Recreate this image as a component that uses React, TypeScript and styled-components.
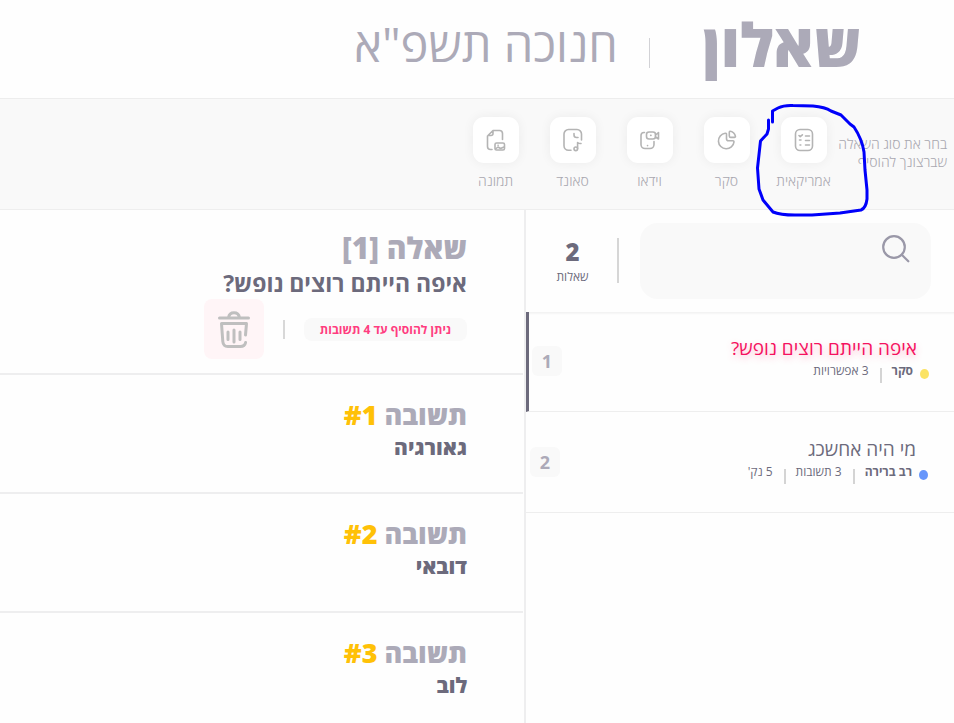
import React from "react";
import styled, { createGlobalStyle } from "styled-components";

const GlobalStyle = createGlobalStyle`
  * { box-sizing: border-box; }
  html, body, #root { height: 100%; }
  body {
    margin: 0;
    background: #fefefe;
    color: #6c6a7c;
    font-family: "Open Sans", "Noto Sans", sans-serif;
    overflow: hidden;
  }
  h1, h2, h3, p, ul, ol { margin: 0; padding: 0; }
  ul, ol { list-style: none; }
  button { font: inherit; border: 0; padding: 0; background: none; cursor: pointer; }
`;

const Page = styled.div`
  min-height: 100%;
  display: flex;
  flex-direction: column;
`;

const Header = styled.header`
  display: flex;
  align-items: center;
  height: 99px;
  padding: 0 93px 10px 0;
  border-bottom: 1px solid #ededed;
  color: #acaab8;
`;

const Brand = styled.h1`
  font-size: 60px;
  line-height: 80px;
  font-weight: 800;
`;

const HeaderRule = styled.span`
  width: 1px;
  height: 30px;
  margin: 18px 53px 0 31px;
  background: #d2d2d6;
`;

const QuizName = styled.h2`
  font-size: 47px;
  line-height: 64px;
  font-weight: 400;
`;

const Toolbar = styled.nav`
  position: relative;
  display: flex;
  height: 111px;
  padding-right: 7px;
  background: #f9f9f9;
  border-bottom: 1px solid #eeeeee;
`;

const Hint = styled.p`
  width: 105px;
  padding-top: 36px;
  font-size: 14px;
  line-height: 18px;
  font-weight: 300;
  color: #a9a8b0;
  white-space: nowrap;
`;

const Tool = styled.button`
  width: 77px;
  display: flex;
  flex-direction: column;
  align-items: center;
  padding-top: 18px;
  font-size: 14px;
  line-height: 20px;
  font-weight: 300;
  color: #a9a8b0;
`;

const ToolTile = styled.span`
  display: grid;
  place-items: center;
  width: 46px;
  height: 46px;
  margin-bottom: 8px;
  border-radius: 11px;
  background: #fff;
  box-shadow: 0 0 12px rgba(0, 0, 0, 0.06);
`;

const LineIcon = styled.svg`
  fill: none;
  stroke: #b4b4b4;
  stroke-width: 1.6;
  stroke-linecap: round;
  stroke-linejoin: round;
`;

const Scribble = styled.svg`
  position: absolute;
  top: 0;
  right: 84px;
  overflow: visible;
  pointer-events: none;
`;

const Main = styled.main`
  flex: 1;
  display: grid;
  grid-template-columns: 430px 1fr;
`;

const Sidebar = styled.aside`
  border-left: 2px solid #eeeeef;
`;

const SearchBar = styled.div`
  display: flex;
  height: 102px;
  padding: 13px 23px 0 0;
`;

const SearchBox = styled.label`
  flex: 1;
  display: flex;
  height: 76px;
  padding: 12px 21px;
  border-radius: 18px;
  background: #f9f9f9;
`;

const SearchInput = styled.input`
  flex: 1;
  min-width: 0;
  height: 30px;
  border: 0;
  outline: 0;
  background: transparent;
  font: inherit;
  color: inherit;
`;

const SearchRule = styled.span`
  width: 2px;
  height: 45px;
  margin: 15px 21px 0 0;
  background: #d6d6d6;
`;

const Count = styled.div`
  width: 91px;
  padding: 14px 0 0 2px;
  text-align: center;
  font-size: 12px;
  line-height: 20px;
`;

const CountNumber = styled.strong`
  display: block;
  font-size: 24px;
  line-height: 30px;
  font-weight: 800;
`;

const QuestionRow = styled.li<{ $active?: boolean }>`
  display: flex;
  align-items: flex-start;
  justify-content: space-between;
  height: ${(p) => (p.$active ? 100 : 101)}px;
  padding: ${(p) => (p.$active ? "23px 25px 0 3px" : "24px 26px 0 4px")};
  border-bottom: 1px solid #eeeeee;
  border-left: ${(p) => (p.$active ? "3px solid #6c6a7c" : "0")};
  box-shadow: ${(p) => (p.$active ? "inset 0 3px 3px -2px #ececec" : "none")};
`;

const QuestionTitle = styled.h3<{ $active?: boolean }>`
  padding: 0 12px 2px 0;
  font-size: 19px;
  line-height: 26px;
  font-weight: 400;
  color: ${(p) => (p.$active ? "#f5125f" : "#6c6a7c")};
  text-shadow: ${(p) => (p.$active ? "0 3px 6px rgba(255, 60, 120, 0.35)" : "none")};
`;

const Meta = styled.div`
  display: flex;
  font-size: 12px;
  line-height: 16px;
`;

const Dot = styled.span<{ $color: string }>`
  width: 9px;
  height: 10px;
  margin: 6px 0 0 7px;
  border-radius: 50%;
  background: ${(p) => p.$color};
`;

const MetaRule = styled.span`
  width: 2px;
  height: 15px;
  margin: 5px 10px 0 11px;
  background: #d4d4d4;
`;

const Order = styled.span`
  width: 30px;
  height: 30px;
  margin-top: 11px;
  border-radius: 6px;
  background: #f9f9f9;
  color: #acaab8;
  text-align: center;
  font-size: 18px;
  line-height: 31px;
  font-weight: 700;
`;

const Detail = styled.section`
  min-width: 0;
`;

const Block = styled.article<{ $tall?: boolean }>`
  height: ${(p) => (p.$tall ? 165 : 119)}px;
  margin-right: 1px;
  padding: ${(p) => (p.$tall ? "18px 56px 0 0" : "20px 56px 0 0")};
  border-bottom: 2px solid #eeeeef;
`;

const BlockLabel = styled.h2<{ $large?: boolean }>`
  font-size: ${(p) => (p.$large ? 30 : 27)}px;
  line-height: 40px;
  font-weight: 800;
  color: #acaab8;
`;

const Accent = styled.span`
  color: #ffc107;
`;

const BlockText = styled.p`
  font-size: 21px;
  line-height: 24px;
  font-weight: 800;
`;

const QuestionText = styled(BlockText)`
  font-size: 23px;
  line-height: 31px;
  font-weight: 700;
`;

const Actions = styled.div`
  display: flex;
  align-items: center;
  height: 60px;
`;

const Chip = styled.span`
  padding: 0 16px;
  border-radius: 8px;
  background: #f9f9f9;
  color: #ff3d7f;
  font-size: 12px;
  line-height: 23px;
  font-weight: 700;
`;

const ActionRule = styled.span`
  width: 2px;
  height: 19px;
  margin: 0 19px;
  background: #d8d8d8;
`;

const DeleteButton = styled.button`
  display: grid;
  place-items: center;
  width: 60px;
  height: 60px;
  border-radius: 8px;
  background: #fff5f7;
`;

const QuizIcon = () => (
  <LineIcon width="20" height="24" viewBox="0 0 20 24">
    <rect x="1.5" y="1.5" width="17" height="21" rx="4.5" />
    <path d="M5 7.5l1.2 1.2L8.4 6.8M11.5 8h4M5.5 12h1.5M11.5 12.500h4M11.500 17h4M6 17h.8" />
  </LineIcon>
);

const PollIcon = () => (
  <LineIcon width="20" height="20" viewBox="0 0 20 20">
    <path d="M8.200 3.200A7.800 7.800 0 1 0 17 11.800c0-.7-.4-1-1-1h-4.500c-1.400 0-2-.6-2-2V4.200c0-.7-.5-1.100-1.300-1z" />
    <path d="M12.300 2.300c0-.8.5-1.200 1.200-1 2.500.6 4.300 2.400 4.900 4.800.2.800-.3 1.300-1 1.300h-3.600c-1 0-1.500-.5-1.500-1.500z" />
  </LineIcon>
);

const VideoIcon = () => (
  <LineIcon width="22" height="22" viewBox="0 0 22 22">
    <path d="M5.500 3.500H5A3 3 0 0 0 2 6.500v9a4 4 0 0 0 4 4h5a4 4 0 0 0 4-4v-3" />
    <rect x="7.500" y="3" width="9" height="7" rx="2.500" />
    <path d="M16.500 6l3-2.500v6.500l-3-2M11.700 6.400h.3M8.500 16.600h.1" />
  </LineIcon>
);

const SoundIcon = () => (
  <LineIcon width="22" height="24" viewBox="0 0 22 24">
    <path d="M9 22.300H6.500a4.500 4.500 0 0 1-4.500-4.500V6a4.500 4.500 0 0 1 4.500-4.500H15a4.500 4.500 0 0 1 4.500 4.500v6M12 5.500v1.500a2.500 2.500 0 0 0 2.500 2.500h1.500" />
    <circle cx="13.800" cy="20.800" r="1.800" />
    <path d="M15.600 20.500v-6c1.200 1 2 1.200 3.400 1" />
  </LineIcon>
);

const ImageIcon = () => (
  <LineIcon width="22" height="24" viewBox="0 0 22 24">
    <path d="M7 21.500H5.500a3 3 0 0 1-3-3V8L8 2.500h6.500a3 3 0 0 1 3 3V11.500M3 7.500h3a2 2 0 0 0 2-2v-2.500" />
    <rect x="10" y="15" width="9.500" height="7" rx="1.500" />
    <path d="M10.500 21l2.500-2 2.500 1.500 3.500-1.500M13 17.200h.2" />
  </LineIcon>
);

const SearchIcon = () => (
  <svg width="28" height="28" viewBox="0 0 28 28" fill="none" stroke="#9a98a8" strokeWidth="2.2" strokeLinecap="round">
    <circle cx="12" cy="12" r="10.800" />
    <path d="M20 20l6.300 6.300" />
  </svg>
);

const TrashIcon = () => (
  <svg width="34" height="40" viewBox="0 0 34 40" fill="none" stroke="#bfbfbf" strokeWidth="3" strokeLinecap="round" strokeLinejoin="round">
    <path d="M2.500 9h29M11.500 8.500c.7-3.500 2.500-4.700 5.500-4.700s4.800 1.200 5.500 4.700M28.500 26l1-11.500H4.500l1.300 18c.3 3.500 2 5 5 5h12.500c3 0 4.800-1.500 5.300-4M11 23v7.500M17 21v12M23 23v7.500" />
  </svg>
);

const tools = [
  { label: "אמריקאית", Icon: QuizIcon },
  { label: "סקר", Icon: PollIcon },
  { label: "וידאו", Icon: VideoIcon },
  { label: "סאונד", Icon: SoundIcon },
  { label: "תמונה", Icon: ImageIcon },
];

const questions = [
  { title: "איפה הייתם רוצים נופש?", kind: "סקר", color: "#fbe364", facts: ["3 אפשרויות"] },
  { title: "מי היה אחשכג", kind: "רב ברירה", color: "#6796fb", facts: ["3 תשובות", "5 נק'"] },
];

const answers = ["גאורגיה", "דובאי", "לוב"];

export default function App() {
  return (
    <Page dir="rtl" lang="he">
      <GlobalStyle />
      <Header>
        <Brand>שאלון</Brand>
        <HeaderRule />
        <QuizName>חנוכה תשפ"א</QuizName>
      </Header>
      <Toolbar>
        <Hint>
          בחר את סוג השאלה
          <br />
          שברצונך להוסיף
        </Hint>
        {tools.map(({ label, Icon }) => (
          <Tool key={label} type="button">
            <ToolTile>
              <Icon />
            </ToolTile>
            {label}
          </Tool>
        ))}
        <Scribble width="114" height="118" viewBox="756 99 114 118" fill="none" stroke="#0000fa" strokeWidth="3" strokeLinecap="round" strokeLinejoin="round" aria-hidden="true">
          <path d="M772.500 122V111L778 108Q784 105 793 105.500L813 106Q825 107 831 111L841 115L850 124L854 127Q862 139 864 152L865 170L867 190V199Q866 208 861 210L840 213L812 215H795Q780 215 773 212L768 206L763 200L759 189L757.500 168L759.500 150L760.500 141L767 134L768.500 129V120" />
        </Scribble>
      </Toolbar>
      <Main>
        <Sidebar>
          <SearchBar>
            <SearchBox>
              <SearchIcon />
              <SearchInput type="search" aria-label="חיפוש" />
            </SearchBox>
            <SearchRule />
            <Count>
              <CountNumber>2</CountNumber>
              שאלות
            </Count>
          </SearchBar>
          <ol>
            {questions.map((q, i) => (
              <QuestionRow key={q.title} $active={i === 0}>
                <div>
                  <QuestionTitle $active={i === 0}>{q.title}</QuestionTitle>
                  <Meta>
                    <Dot $color={q.color} />
                    <strong>{q.kind}</strong>
                    {q.facts.map((fact) => (
                      <React.Fragment key={fact}>
                        <MetaRule />
                        <span>{fact}</span>
                      </React.Fragment>
                    ))}
                  </Meta>
                </div>
                <Order>{i + 1}</Order>
              </QuestionRow>
            ))}
          </ol>
        </Sidebar>
        <Detail>
          <Block $tall>
            <BlockLabel $large>שאלה [1]</BlockLabel>
            <QuestionText>איפה הייתם רוצים נופש?</QuestionText>
            <Actions>
              <Chip>ניתן להוסיף עד 4 תשובות</Chip>
              <ActionRule />
              <DeleteButton type="button" aria-label="מחיקה">
                <TrashIcon />
              </DeleteButton>
            </Actions>
          </Block>
          {answers.map((answer, i) => (
            <Block key={answer}>
              <BlockLabel>
                תשובה <Accent>#{i + 1}</Accent>
              </BlockLabel>
              <BlockText>{answer}</BlockText>
            </Block>
          ))}
        </Detail>
      </Main>
    </Page>
  );
}
